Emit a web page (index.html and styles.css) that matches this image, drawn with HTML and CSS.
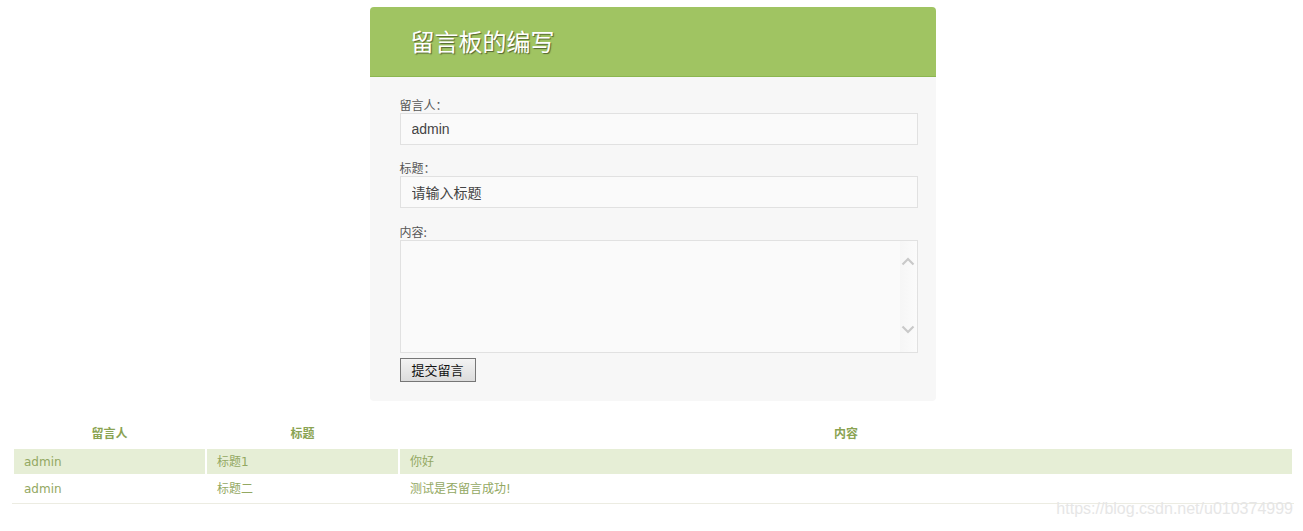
FILE: index.html
```html
<!DOCTYPE html>
<html lang="zh">
<head>
<meta charset="utf-8">
<title>留言板的编写</title>
<link rel="stylesheet" href="styles.css">
</head>
<body>
<div class="page">
  <div class="card">
    <div class="card-head"><h1 class="title">留言板的编写</h1></div>
    <form class="card-body">
      <label class="lbl">留言人：</label>
      <input class="field" type="text" value="admin">
      <label class="lbl">标题：</label>
      <input class="field" type="text" value="请输入标题">
      <label class="lbl lbl-area">内容:</label>
      <div class="area">
        <textarea class="area-text"></textarea>
        <div class="scroll">
          <svg width="14" height="9" viewBox="0 0 14 9"><path d="M1.5 7.5 L7 2 L12.5 7.5" fill="none" stroke="#c9c9c9" stroke-width="2.2"/></svg>
          <svg width="14" height="9" viewBox="0 0 14 9"><path d="M1.5 1.5 L7 7 L12.5 1.5" fill="none" stroke="#c9c9c9" stroke-width="2.2"/></svg>
        </div>
      </div>
      <button class="btn" type="button">提交留言</button>
    </form>
  </div>
  <table class="list">
    <thead>
      <tr><th class="c1">留言人</th><th class="c2">标题</th><th class="c3">内容</th></tr>
    </thead>
    <tbody>
      <tr class="odd"><td>admin</td><td>标题1</td><td>你好</td></tr>
      <tr><td>admin</td><td>标题二</td><td>测试是否留言成功!</td></tr>
    </tbody>
  </table>
  <div class="watermark">https://blog.csdn.net/u010374999</div>
</div>
</body>
</html>
```

FILE: styles.css
```css
html, body {
  margin: 0;
  padding: 0;
  background: #ffffff;
}
body {
  font-family: "Liberation Sans", "Noto Sans CJK SC", sans-serif;
  color: #444;
}
.page {
  padding-top: 7px;
  position: relative;
  height: 524px;
  overflow: hidden;
}
.card {
  width: 566px;
  margin: 0 auto;
  position: relative;
  left: 1px;
  border-radius: 4px;
  background: #f7f7f7;
  overflow: hidden;
}
.card-head {
  height: 69px;
  background: #a0c462;
  border-bottom: 1px solid #8bb650;
  display: flex;
  align-items: center;
  padding-left: 41px;
}
.title {
  margin: 0;
  font-family: "Noto Sans CJK SC", sans-serif;
  font-weight: 400;
  font-size: 24px;
  line-height: 30px;
  color: #ffffff;
  text-shadow: 1px 1px 1px rgba(50, 60, 30, 0.7);
  position: relative;
  top: -1px;
}
.card-body {
  margin: 0;
  padding: 19px 18px 19px 30px;
  display: flex;
  flex-direction: column;
  align-items: flex-start;
}
.lbl {
  display: block;
  font-family: "Noto Sans CJK SC", sans-serif;
  font-size: 12px;
  line-height: 17px;
  color: #555;
  margin-top: 14px;
}
.lbl:first-child {
  margin-top: 0;
}
.lbl-area {
  margin-top: 15px;
}
.field {
  box-sizing: border-box;
  width: 518px;
  height: 32px;
  margin: 0;
  border: 1px solid #e1e1e1;
  background: #fafafa;
  padding: 0 11px;
  font-family: "Liberation Sans", "Noto Sans CJK SC", sans-serif;
  font-size: 14px;
  color: #444;
  outline: none;
}
.area {
  box-sizing: border-box;
  width: 518px;
  height: 113px;
  border: 1px solid #e1e1e1;
  background: #fafafa;
  display: flex;
}
.area-text {
  flex: 1;
  border: 0;
  margin: 0;
  background: transparent;
  resize: none;
  outline: none;
  overflow: hidden;
}
.scroll {
  width: 17px;
  background: linear-gradient(to right, #f6f6f6, #fbfbfb);
  display: flex;
  flex-direction: column;
  justify-content: space-between;
  align-items: center;
  padding: 16px 0 18px;
}
.scroll svg {
  display: block;
}
.btn {
  margin-top: 5px;
  box-sizing: border-box;
  width: 76px;
  height: 24px;
  border: 1px solid #767676;
  background: linear-gradient(#f3f3f3, #dcdcdc);
  font-family: "Noto Sans CJK SC", sans-serif;
  font-size: 13px;
  line-height: 20px;
  color: #111;
  padding: 0;
}
.list {
  margin: 19px 0 0 12px;
  width: 1282px;
  border-collapse: separate;
  border-spacing: 2px;
  border-bottom: 1px solid #ecece2;
  font-family: "DejaVu Sans", "Noto Sans CJK SC", sans-serif;
  font-size: 12px;
}
.list th, .list td {
  height: 25px;
  padding: 0 10px;
  vertical-align: middle;
  line-height: 16px;
}
.list th {
  font-family: "Noto Sans CJK SC", sans-serif;
  font-weight: 700;
  color: #8aa352;
  text-align: center;
  padding-bottom: 3px;
  height: 22px;
}
.list td {
  color: #93a862;
  text-align: left;
}
.c1, .c2 {
  width: 171px;
}
.odd td {
  background: #e6eed6;
}
.watermark {
  position: absolute;
  right: 10px;
  top: 500px;
  font-family: "Liberation Sans", sans-serif;
  font-size: 16px;
  color: #e6e6e6;
}
```
